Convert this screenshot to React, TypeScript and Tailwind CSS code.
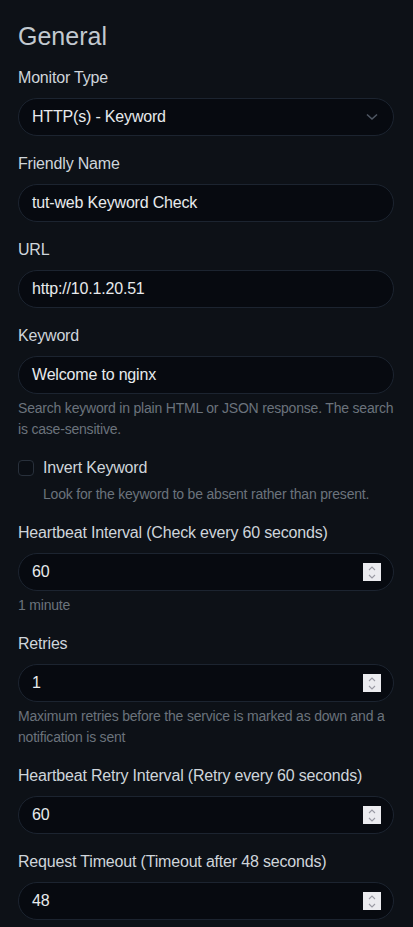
import React from "react";

const font = { fontFamily: '"Liberation Sans", Arial, sans-serif' };

function Label({ children }: { children: React.ReactNode }) {
  return <div className="text-[16px] leading-[24px] text-[#cfd5db] mb-[8px]">{children}</div>;
}

function Help({ children, className = "" }: { children: React.ReactNode; className?: string }) {
  return <div className={"mt-[4px] text-[14px] leading-[21px] text-[#6b737c] tracking-[-0.2px] " + className}>{children}</div>;
}

function Field({ value, kind }: { value: string; kind?: "select" | "number" }) {
  return (
    <div className="h-[38px] rounded-[19px] border border-[#1c2430] bg-[#070a10] pl-[13px] pr-[12px] flex items-center justify-between">
      <span className="text-[16px] text-[#e8eaed]">{value}</span>
      {kind === "select" && (
        <svg width="12" height="8" viewBox="0 0 12 8" className="mr-[3px]">
          <path d="M1 1.5 L6 6 L11 1.5" fill="none" stroke="#4f5763" strokeWidth="1.6" />
        </svg>
      )}
      {kind === "number" && (
        <div className="w-[18px] h-[18px] bg-[#ebebef] flex flex-col items-center justify-center gap-[3px]">
          <svg width="8" height="5" viewBox="0 0 8 5">
            <path d="M1 4 L4 1 L7 4" fill="none" stroke="#9a9aa4" strokeWidth="1.1" />
          </svg>
          <svg width="8" height="5" viewBox="0 0 8 5">
            <path d="M1 1 L4 4 L7 1" fill="none" stroke="#9a9aa4" strokeWidth="1.1" />
          </svg>
        </div>
      )}
    </div>
  );
}

export default function App() {
  return (
    <div className="min-h-[927px] bg-[#0d1117] pl-[18px] pr-[19px] pt-[22px] tracking-[-0.18px]" style={font}>
      <h4 className="text-[25px] leading-[29px] text-[#c2c9d0] mb-[15px] tracking-normal">General</h4>

      <Label>Monitor Type</Label>
      <Field value="HTTP(s) - Keyword" kind="select" />

      <div className="mt-[16px]">
        <Label>Friendly Name</Label>
        <Field value="tut-web Keyword Check" />
      </div>

      <div className="mt-[16px]">
        <Label>URL</Label>
        <Field value="http://10.1.20.51" />
      </div>

      <div className="mt-[16px]">
        <Label>Keyword</Label>
        <Field value="Welcome to nginx" />
        <Help>Search keyword in plain HTML or JSON response. The search is case-sensitive.</Help>
      </div>

      <div className="mt-[16px]">
        <div className="flex items-center h-[24px]">
          <div className="w-[16px] h-[16px] rounded-[4px] border border-[#28303b] bg-[#0a0e14]" />
          <span className="ml-[9px] text-[16px] text-[#cfd5db]">Invert Keyword</span>
        </div>
        <Help className="pl-[25px]">Look for the keyword to be absent rather than present.</Help>
      </div>

      <div className="mt-[16px]">
        <Label>Heartbeat Interval (Check every 60 seconds)</Label>
        <Field value="60" kind="number" />
        <Help>1 minute</Help>
      </div>

      <div className="mt-[16px]">
        <Label>Retries</Label>
        <Field value="1" kind="number" />
        <Help>Maximum retries before the service is marked as down and a notification is sent</Help>
      </div>

      <div className="mt-[16px]">
        <Label>Heartbeat Retry Interval (Retry every 60 seconds)</Label>
        <Field value="60" kind="number" />
      </div>

      <div className="mt-[16px]">
        <Label>Request Timeout (Timeout after 48 seconds)</Label>
        <Field value="48" kind="number" />
      </div>
    </div>
  );
}
